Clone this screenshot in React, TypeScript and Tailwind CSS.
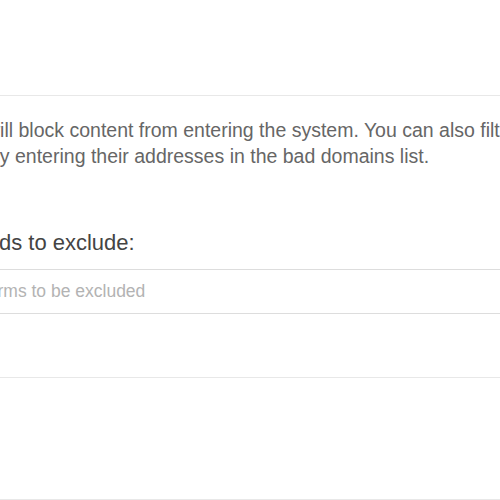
export default function App() {
	return (
		<div className="w-[500px] h-[500px] overflow-hidden bg-white font-['Liberation_Sans',Arial,sans-serif]">
			<div className="h-[96px] border-b border-[#e8e8e8]" />
			<div className="pt-[21px] pb-[60px] text-[19.5px] leading-[26px] text-[#666] whitespace-nowrap">
				<p className="-ml-[14px]">will block content from entering the system. You can also filter</p>
				<p className="-ml-[11px]">by entering their addresses in the bad domains list.</p>
			</div>
			<div className="text-[22px] leading-[28px] text-[#444] whitespace-nowrap -ml-[41px]">Words to exclude:</div>
			<div className="mt-[12px] -ml-[33px]">
				<input
					className="w-[600px] h-[45px] border-y border-[#ddd] px-[12px] text-[17.5px] text-[#444] placeholder:text-[#b3b3b3] outline-none"
					placeholder="Terms to be excluded"
				/>
			</div>
			<div className="h-[64px] border-b border-[#e8e8e8]" />
			<div className="h-[122px] border-b border-[#e8e8e8]" />
		</div>
	)
}
